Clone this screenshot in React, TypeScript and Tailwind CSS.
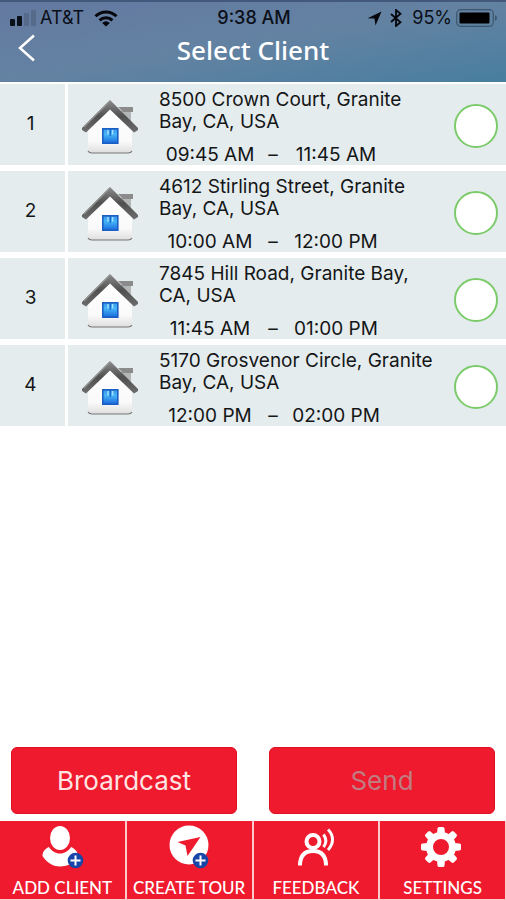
import React from "react";

type Stop = { id: number; address: string; start: string; end: string };

const stops: Stop[] = [
  { id: 1, address: "8500 Crown Court, Granite Bay, CA, USA", start: "09:45 AM", end: "11:45 AM" },
  { id: 2, address: "4612 Stirling Street, Granite Bay, CA, USA", start: "10:00 AM", end: "12:00 PM" },
  { id: 3, address: "7845 Hill Road, Granite Bay, CA, USA", start: "11:45 AM", end: "01:00 PM" },
  { id: 4, address: "5170 Grosvenor Circle, Granite Bay, CA, USA", start: "12:00 PM", end: "02:00 PM" },
];

function SignalIcon() {
  return (
    <svg width="26" height="16" viewBox="0 0 26 16" aria-hidden="true">
      <rect x="0" y="9" width="5" height="7" rx="1" fill="#0b0f18" />
      <rect x="7" y="6" width="5" height="10" rx="1" fill="#0b0f18" />
      <rect x="14" y="3" width="5" height="13" rx="1" fill="#566b8a" />
      <rect x="21" y="0" width="5" height="16" rx="1" fill="#566b8a" />
    </svg>
  );
}

function WifiIcon() {
  return (
    <svg width="24" height="17" viewBox="0 0 24 17" fill="none" stroke="#05070c" strokeWidth="3" aria-hidden="true">
      <path d="M1.5 6.2a15 15 0 0 1 21 0" />
      <path d="M5.6 10.4a9.2 9.2 0 0 1 12.8 0" />
      <path d="M12 16.6 8.2 12.9a5.4 5.4 0 0 1 7.6 0z" fill="#05070c" stroke="none" />
    </svg>
  );
}

function LocationIcon() {
  return (
    <svg width="15" height="15" viewBox="0 0 15 15" aria-hidden="true">
      <path d="M14.5.6 8.500 14.4l-1-6.800L.6 7.2z" fill="#05070c" />
    </svg>
  );
}

function BluetoothIcon() {
  return (
    <svg width="12" height="18" viewBox="0 0 12 18" fill="none" stroke="#05070c" strokeWidth="1.8" aria-hidden="true">
      <path d="M1 5l9.5 8.2L6 17V1l4.5 3.8L1 13" />
    </svg>
  );
}

function BatteryIcon() {
  return (
    <svg width="42" height="18" viewBox="0 0 42 18" aria-hidden="true">
      <rect x=".7" y=".7" width="36.6" height="16.6" rx="4" fill="none" stroke="#3d566e" strokeWidth="1.2" />
      <rect x="3.5" y="3.5" width="30" height="11" rx="1" fill="#000" />
      <path d="M39 6.2c2.6.8 2.6 4.8 0 5.6z" fill="#3d566e" />
    </svg>
  );
}

function HouseIcon({ id }: { id: number }) {
  const wall = `wall-${id}`;
  const roof = `roof-${id}`;
  const pane = `pane-${id}`;
  return (
    <svg width="56" height="54" viewBox="0 0 56 54" className="mt-1" aria-hidden="true">
      <defs>
        <linearGradient id={wall} x1="0" y1="0" x2="0" y2="1">
          <stop offset="0" stopColor="#fff" />
          <stop offset=".75" stopColor="#fafafa" />
          <stop offset="1" stopColor="#dedede" />
        </linearGradient>
        <linearGradient id={roof} x1="0" y1="0" x2="0" y2="1">
          <stop offset="0" stopColor="#8c8c8c" />
          <stop offset=".5" stopColor="#505050" />
          <stop offset="1" stopColor="#6d6d6d" />
        </linearGradient>
        <linearGradient id={pane} x1="0" y1="0" x2="0" y2="1">
          <stop offset="0" stopColor="#3a98ea" />
          <stop offset=".4" stopColor="#45b4f6" />
          <stop offset="1" stopColor="#1a6adc" />
        </linearGradient>
      </defs>
      <path d="M39 11h10v13L39 15z" fill="#b2b6b7" />
      <path d="M36 7h15v5H41z" fill="#8b8b8b" />
      <path d="M28 6 6 28v22c0 2 1 3 3 3h38c2 0 3-1 3-3V28z" fill={`url(#${wall})`} />
      <path d="M6 51c1 1.8 2 2 4 2h36c2 0 3-.2 4-2" fill="none" stroke="#777" strokeWidth="1.2" />
      <path d="M28 0 56 28v2l-4 2.500L28 9.500 4 32.500 0 30v-2z" fill={`url(#${roof})`} />
      <path d="M28 1 2 27" fill="none" stroke="#929292" strokeWidth="1.2" />
      <rect x="20.800" y="28.800" width="15" height="14.400" fill={`url(#${pane})`} stroke="#1c5fc4" strokeWidth="1.600" />
      <path d="M28.300 29v7" stroke="#1c5fc4" strokeWidth="1.200" />
      <path d="M26 30v4.500M30.600 30v4.500" stroke="#a3e3ff" strokeWidth="1.400" />
    </svg>
  );
}

function PlusBadge({ x, y }: { x: number; y: number }) {
  return (
    <g>
      <circle cx={x} cy={y} r="7.8" fill="#1746a8" />
      <path d={`M${x - 5} ${y}h10M${x} ${y - 5}v10`} stroke="#fff" strokeWidth="2" />
    </g>
  );
}

function AddClientIcon() {
  return (
    <svg width="44" height="44" viewBox="0 0 44 44" aria-hidden="true">
      <ellipse cx="20" cy="13" rx="10" ry="12" fill="#fff" />
      <path d="M9 22C4.500 24 2.500 27 2.500 31 7 38.500 14 41.500 20 41.500c8 0 15-4 18-10.500 0-4-2.500-7-7-9-2.500 4-6.500 6.500-11 6.500S11.500 26 9 22z" fill="#fff" />
      <PlusBadge x={35.5} y={35.5} />
    </svg>
  );
}

function CreateTourIcon() {
  return (
    <svg width="44" height="44" viewBox="0 0 44 44" aria-hidden="true">
      <circle cx="22" cy="20" r="19.500" fill="#fff" />
      <path d="M33.500 12 20.500 31l-2-10.500-8-3.500z" fill="#ef1a2d" />
      <PlusBadge x={33.5} y={35.5} />
    </svg>
  );
}

function FeedbackIcon() {
  return (
    <svg width="44" height="44" viewBox="0 0 44 44" fill="none" stroke="#fff" strokeWidth="4" aria-hidden="true">
      <circle cx="19" cy="16.500" r="6.500" />
      <path d="M6 40.500c0-10 5-14.500 13-14.500s13 4.500 13 14.500" />
      <path d="M29.500 9.500c3 4 3 8.500 0 12.500" strokeWidth="3" />
      <path d="M34 4.500c6 6 6 14 0 20.500" strokeWidth="3" />
    </svg>
  );
}

function SettingsIcon() {
  return (
    <svg width="44" height="44" viewBox="0 0 44 44" aria-hidden="true">
      <g transform="translate(20 22)" fill="#fff">
        <circle r="11.500" fill="none" stroke="#fff" strokeWidth="7" />
        {[0, 45, 90, 135, 180, 225, 270, 315].map((angle) => (
          <path key={angle} d="M-4-13-3.500-18.500Q-3.200-20-2-20h4Q3.200-20 3.500-18.500L4-13z" transform={`rotate(${angle})`} />
        ))}
      </g>
    </svg>
  );
}

const tabs = [
  { label: "ADD CLIENT", icon: <AddClientIcon /> },
  { label: "CREATE TOUR", icon: <CreateTourIcon /> },
  { label: "FEEDBACK", icon: <FeedbackIcon /> },
  { label: "SETTINGS", icon: <SettingsIcon /> },
];

function StatusBar() {
  return (
    <div className="grid grid-cols-[1fr_auto_1fr] items-center pt-1 pr-2 pl-2.5 text-[18px] leading-6 text-[#0b0f18]">
      <div className="flex items-center gap-1">
        <SignalIcon />
        <span>AT&amp;T</span>
        <span className="pl-1.5"><WifiIcon /></span>
      </div>
      <div className="font-medium">9:38 AM</div>
      <div className="flex items-center justify-end gap-1">
        <LocationIcon />
        <span className="pl-1"><BluetoothIcon /></span>
        <span className="pl-1.5">95%</span>
        <BatteryIcon />
      </div>
    </div>
  );
}

function StopRow({ stop }: { stop: Stop }) {
  return (
    <li className="flex h-[81px] gap-[3px]">
      <div className="flex w-[65px] items-center justify-center bg-[#e5ecee] pr-1 text-[19px]">{stop.id}</div>
      <label className="flex flex-1 items-center bg-[#e5ecee] pr-2 pl-3.5">
        <HouseIcon id={stop.id} />
        <span className="ml-[21px] flex-1 self-start pt-[5px] text-[19px] leading-[22px]">
          <span className="block max-w-[280px]">{stop.address}</span>
          <span className="mt-[11px] grid grid-cols-[102px_24px_102px] text-center">
            <span>{stop.start}</span>
            <span>–</span>
            <span>{stop.end}</span>
          </span>
        </span>
        <input
          type="checkbox"
          className="mt-0.5 size-11 appearance-none rounded-full border-2 border-[#7ccb6b] bg-white checked:bg-[#7ccb6b]"
        />
      </label>
    </li>
  );
}

export default function App() {
  return (
    <div className="flex min-h-screen flex-col bg-white font-['Inter','Liberation_Sans',sans-serif] text-[#141617]">
      <header className="h-[82px] border-t-2 border-[#42597b] bg-linear-to-br from-[#6479a0] via-[#6382a2] to-[#477e9f]">
        <StatusBar />
        <div className="grid grid-cols-[1fr_auto_1fr] items-center pl-4">
          <button type="button" aria-label="Back" className="w-6 pb-1">
            <svg width="20" height="28" viewBox="0 0 20 28" fill="none" stroke="#fff" strokeWidth="2.500" aria-hidden="true">
              <path d="M18 1.500 4 14l14 12.500" />
            </svg>
          </button>
          <h1 className="pr-4 font-['Noto_Sans',sans-serif] text-[26px] leading-10 font-medium text-white">Select Client</h1>
        </div>
      </header>

      <main className="flex flex-1 flex-col">
        <ul className="flex flex-col gap-1.5 pt-0.5">
          {stops.map((stop) => (
            <StopRow key={stop.id} stop={stop} />
          ))}
        </ul>
        <div className="mt-auto grid grid-cols-2 gap-8 px-[11px] pb-[7px] text-[26px]">
          <button type="button" className="h-[67px] rounded-md border border-[#e01020] bg-[#ef1a2d] text-[#ffe4e4]">
            Broardcast
          </button>
          <button type="button" disabled className="h-[67px] rounded-md border border-[#e01020] bg-[#ef1a2d] text-[#c17c83]">
            Send
          </button>
        </div>
      </main>

      <nav className="grid grid-cols-4 gap-0.5 bg-[#fbc9c9] pr-px pb-px font-['Lato','Open_Sans',sans-serif]">
        {tabs.map((tab) => (
          <a
            key={tab.label}
            href="#"
            className="flex h-[78px] flex-col items-center bg-[#ef1a2d] pt-1 text-[17px] leading-5 font-medium whitespace-nowrap text-white"
          >
            {tab.icon}
            <span className="mt-[9px]">{tab.label}</span>
          </a>
        ))}
      </nav>
    </div>
  );
}
